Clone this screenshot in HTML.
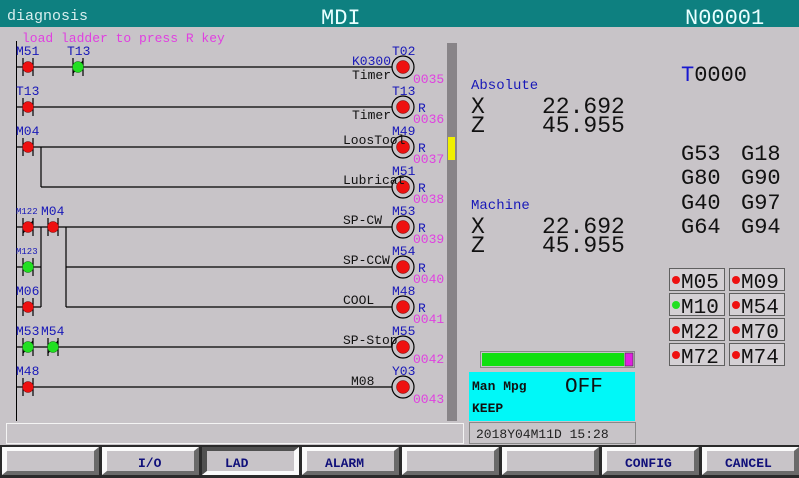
<!DOCTYPE html>
<html><head><meta charset="utf-8"><style>
html,body{margin:0;padding:0;width:799px;height:478px;overflow:hidden;background:#c8c4c8;}
svg{display:block;font-family:"Liberation Mono","DejaVu Sans Mono",monospace;}
</style></head><body>
<svg width="799" height="478" viewBox="0 0 799 478" xmlns="http://www.w3.org/2000/svg">
<rect x="0" y="0" width="799" height="478" fill="#c8c4c8"/>
<!-- title bar -->
<rect x="0" y="0" width="799" height="27" fill="#0e8080"/>
<text x="7" y="20" font-size="15" fill="#d8eeee">diagnosis</text>
<text x="321" y="24" font-size="22" fill="#e8ffff">MDI</text>
<text x="685" y="24" font-size="22" fill="#e8ffff">N00001</text>

<text x="22" y="42" font-size="13" fill="#e040e0">load ladder to press R key</text>
<!-- left rail -->
<line x1="16.5" y1="41" x2="16.5" y2="421" stroke="#000"/>
<!-- scrollbar -->
<rect x="447" y="43" width="10" height="378" fill="#888488"/>
<rect x="448" y="137" width="7" height="23" fill="#f0f000"/>

<g stroke="#000" stroke-width="1.2" fill="none">
<!-- rung lines -->
<line x1="16" y1="67" x2="392" y2="67"/>
<line x1="16" y1="107" x2="392" y2="107"/>
<line x1="16" y1="147" x2="392" y2="147"/>
<line x1="41" y1="147" x2="41" y2="187"/>
<line x1="41" y1="187" x2="392" y2="187"/>
<line x1="16" y1="227" x2="392" y2="227"/>
<line x1="41" y1="227" x2="41" y2="307"/>
<line x1="16" y1="267" x2="41" y2="267"/>
<line x1="16" y1="307" x2="41" y2="307"/>
<line x1="66" y1="227" x2="66" y2="307"/>
<line x1="66" y1="267" x2="392" y2="267"/>
<line x1="66" y1="307" x2="392" y2="307"/>
<line x1="16" y1="347" x2="392" y2="347"/>
<line x1="16" y1="387" x2="392" y2="387"/>
<!-- contact bars -->
<path d="M23 58V76M33 58V76 M73 58V76M83 58V76 M73 73L83 61
M23 98V116M33 98V116 M23 138V156M33 138V156
M23 218V236M33 218V236 M23 233L33 221 M48 218V236M58 218V236
M23 258V276M33 258V276 M23 298V316M33 298V316
M23 338V356M33 338V356 M23 353L33 341 M48 338V356M58 338V356 M48 353L58 341
M23 378V396M33 378V396"/>
<!-- coils -->
<circle cx="403" cy="67" r="11"/><circle cx="403" cy="107" r="11"/><circle cx="403" cy="147" r="11"/>
<circle cx="403" cy="187" r="11"/><circle cx="403" cy="227" r="11"/><circle cx="403" cy="267" r="11"/>
<circle cx="403" cy="307" r="11"/><circle cx="403" cy="347" r="11"/><circle cx="403" cy="387" r="11"/>
</g>
<g fill="#ee1010" stroke="#600" stroke-width="0.5">
<circle cx="28" cy="67" r="5.5"/><circle cx="28" cy="107" r="5.5"/><circle cx="28" cy="147" r="5.5"/>
<circle cx="28" cy="227" r="5.5"/><circle cx="53" cy="227" r="5.5"/><circle cx="28" cy="307" r="5.5"/>
<circle cx="28" cy="387" r="5.5"/>
<circle cx="403" cy="67" r="6.5"/><circle cx="403" cy="107" r="6.5"/><circle cx="403" cy="147" r="6.5"/>
<circle cx="403" cy="187" r="6.5"/><circle cx="403" cy="227" r="6.5"/><circle cx="403" cy="267" r="6.5"/>
<circle cx="403" cy="307" r="6.5"/><circle cx="403" cy="347" r="6.5"/><circle cx="403" cy="387" r="6.5"/>
</g>
<g fill="#22e022" stroke="#060" stroke-width="0.5">
<circle cx="78" cy="67" r="5.5"/><circle cx="28" cy="267" r="5.5"/><circle cx="28" cy="347" r="5.5"/><circle cx="53" cy="347" r="5.5"/>
</g>

<g font-size="13" fill="#1818b8">
<text x="16" y="55">M51</text><text x="67" y="55">T13</text><text x="352" y="65">K0300</text><text x="392" y="55">T02</text>
<text x="16" y="95">T13</text><text x="392" y="95">T13</text><text x="418" y="112">R</text>
<text x="16" y="135">M04</text><text x="392" y="135">M49</text><text x="418" y="152">R</text>
<text x="392" y="175">M51</text><text x="418" y="192">R</text>
<text x="16" y="214" font-size="9">M122</text><text x="41" y="215">M04</text><text x="392" y="215">M53</text><text x="418" y="232">R</text>
<text x="16" y="254" font-size="9">M123</text><text x="392" y="255">M54</text><text x="418" y="272">R</text>
<text x="16" y="295">M06</text><text x="392" y="295">M48</text><text x="418" y="312">R</text>
<text x="16" y="335">M53</text><text x="41" y="335">M54</text><text x="392" y="335">M55</text>
<text x="16" y="375">M48</text><text x="392" y="375">Y03</text>
</g>
<g font-size="13" fill="#111">
<text x="352" y="79">Timer</text><text x="352" y="119">Timer</text>
<text x="343" y="144">LoosTool</text><text x="343" y="184">Lubricat</text>
<text x="343" y="224">SP-CW</text><text x="343" y="264">SP-CCW</text><text x="343" y="304">COOL</text>
<text x="343" y="344">SP-Stop</text><text x="351" y="385">M08</text>
</g>
<g font-size="13" fill="#e040e0">
<text x="413" y="83">0035</text><text x="413" y="123">0036</text><text x="413" y="163">0037</text>
<text x="413" y="203">0038</text><text x="413" y="243">0039</text><text x="413" y="283">0040</text>
<text x="413" y="323">0041</text><text x="413" y="363">0042</text><text x="413" y="403">0043</text>
</g>

<!-- right panel -->
<g font-size="14" fill="#1818b8"><text x="471" y="89">Absolute</text><text x="471" y="209">Machine</text></g>
<g font-size="23" fill="#111">
<text x="471" y="113">X</text><text x="542" y="113">22.692</text>
<text x="471" y="132">Z</text><text x="542" y="132">45.955</text>
<text x="471" y="233">X</text><text x="542" y="233">22.692</text>
<text x="471" y="252">Z</text><text x="542" y="252">45.955</text>
</g>
<text x="681" y="81" font-size="22" fill="#111"><tspan fill="#1818d0">T</tspan>0000</text>
<g font-size="22" fill="#111">
<text x="681" y="160">G53</text><text x="741" y="160">G18</text>
<text x="681" y="184">G80</text><text x="741" y="184">G90</text>
<text x="681" y="209">G40</text><text x="741" y="209">G97</text>
<text x="681" y="233">G64</text><text x="741" y="233">G94</text>
</g>
<!-- M buttons -->
<g stroke="#606060" fill="#d4d0d4">
<rect x="669.5" y="268.5" width="55" height="22"/><rect x="729.5" y="268.5" width="55" height="22"/>
<rect x="669.5" y="293.5" width="55" height="22"/><rect x="729.5" y="293.5" width="55" height="22"/>
<rect x="669.5" y="318.5" width="55" height="22"/><rect x="729.5" y="318.5" width="55" height="22"/>
<rect x="669.5" y="343.5" width="55" height="22"/><rect x="729.5" y="343.5" width="55" height="22"/>
</g>
<g fill="#ee1010">
<circle cx="676" cy="280" r="4"/><circle cx="736" cy="280" r="4"/><circle cx="736" cy="305" r="4"/>
<circle cx="676" cy="330" r="4"/><circle cx="736" cy="330" r="4"/><circle cx="676" cy="355" r="4"/><circle cx="736" cy="355" r="4"/>
</g>
<circle cx="676" cy="305" r="4" fill="#22e022"/>
<g font-size="21" fill="#111">
<text x="681" y="288">M05</text><text x="741" y="288">M09</text>
<text x="681" y="313">M10</text><text x="741" y="313">M54</text>
<text x="681" y="338">M22</text><text x="741" y="338">M70</text>
<text x="681" y="363">M72</text><text x="741" y="363">M74</text>
</g>
<!-- progress -->
<rect x="480.5" y="351.5" width="154" height="16" fill="#c8c4c8" stroke="#888"/>
<rect x="482" y="353" width="142" height="13" fill="#10e010"/>
<rect x="625" y="353" width="8" height="13" fill="#e020e0" stroke="#333" stroke-width="0.6"/>
<!-- cyan -->
<rect x="469" y="372" width="166" height="49" fill="#00f8f8"/>
<text x="472" y="390" font-size="13" font-weight="bold" fill="#111">Man Mpg</text>
<text x="565" y="392" font-size="21" fill="#111">OFF</text>
<text x="472" y="412" font-size="13" font-weight="bold" fill="#111">KEEP</text>
<rect x="469.5" y="422.5" width="166" height="21" fill="#c8c4c8" stroke="#888"/>
<text x="476" y="438" font-size="13" fill="#222">2018Y04M11D 15:28</text>
<rect x="6.5" y="423.5" width="457" height="20" fill="#c8c4c8" stroke="#f4f4f4"/>
<!-- button bar -->
<rect x="0" y="445" width="799" height="33" fill="#2a2a2a"/>
<g>
<g id="b"><rect x="2" y="447" width="97" height="28" fill="#c8c4c8"/>
<path d="M2 447H99L94 451H7L7 471L2 475Z" fill="#fafafa"/>
<path d="M99 447V475H2L7 471H94V451Z" fill="#6a6a6a"/></g>
<use href="#b" x="100"/><use href="#b" x="300"/><use href="#b" x="400"/><use href="#b" x="500"/><use href="#b" x="600"/><use href="#b" x="700"/>
<rect x="202" y="447" width="97" height="28" fill="#c8c4c8"/>
<path d="M202 447H299L294 451H207L207 471L202 475Z" fill="#505050"/>
<path d="M299 447V475H202L207 471H294V451Z" fill="#fafafa"/>
</g>
<g font-size="13" font-weight="bold" fill="#10107a">
<text x="138" y="467">I/O</text><text x="225" y="467">LAD</text><text x="325" y="467">ALARM</text>
<text x="625" y="467">CONFIG</text><text x="725" y="467">CANCEL</text>
</g>
</svg>
</body></html>
